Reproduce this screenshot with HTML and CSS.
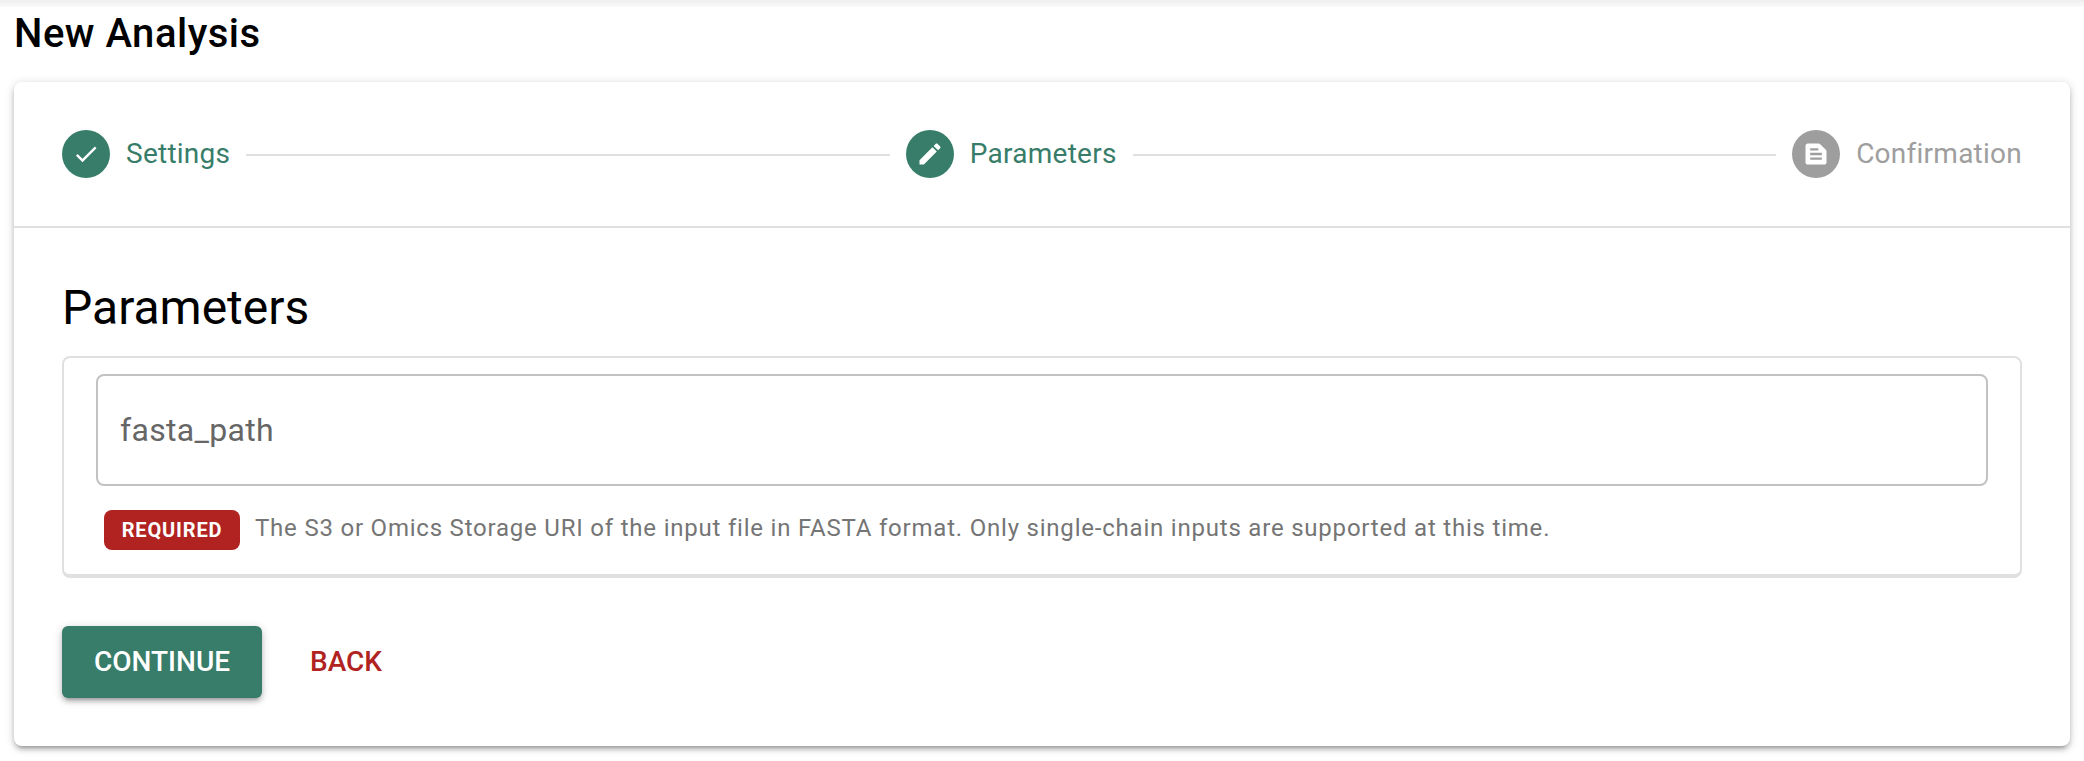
FILE: index.html
```html
<!DOCTYPE html>
<html lang="en">
<head>
<meta charset="utf-8">
<title>New Analysis</title>
<link rel="stylesheet" href="styles.css">
</head>
<body>
<div class="topbar-shadow"></div>
<main class="page">
  <h1 class="page-title">New Analysis</h1>
  <section class="card">
    <nav class="stepper">
      <div class="step">
        <span class="dot"><svg class="icon" viewBox="0 0 24 24"><path d="M9 16.17L4.83 12l-1.42 1.41L9 19 21 7l-1.41-1.41z"/></svg></span>
        <span>Settings</span>
      </div>
      <span class="line"></span>
      <div class="step">
        <span class="dot"><svg class="icon" viewBox="0 0 24 24"><path d="M3 17.25V21h3.75L17.81 9.94l-3.75-3.75L3 17.25zM20.71 7.04c.39-.39.39-1.02 0-1.41l-2.34-2.34c-.39-.39-1.02-.39-1.41 0l-1.83 1.83 3.75 3.75 1.83-1.83z"/></svg></span>
        <span>Parameters</span>
      </div>
      <span class="line"></span>
      <div class="step step-pending">
        <span class="dot"><svg class="icon" viewBox="0 0 24 24"><path fill-rule="evenodd" d="M20.41 8.41l-4.83-4.83c-.37-.37-.88-.58-1.41-.58H5c-1.1 0-2 .9-2 2v14c0 1.1.9 2 2 2h14c1.1 0 2-.9 2-2V9.83c0-.53-.21-1.04-.59-1.42zM7 7h7v2H7V7zm10 10H7v-2h10v2zm0-4H7v-2h10v2z"/></svg></span>
        <span>Confirmation</span>
      </div>
    </nav>
    <div class="content">
      <h2 class="heading">Parameters</h2>
      <div class="params">
        <div class="field">fasta_path</div>
        <div class="hint">
          <span class="badge">REQUIRED</span>
          <span class="caption">The S3 or Omics Storage URI of the input file in FASTA format. Only single-chain inputs are supported at this time.</span>
        </div>
      </div>
      <div class="actions">
        <button class="btn btn-primary">CONTINUE</button>
        <button class="btn btn-flat">BACK</button>
      </div>
    </div>
  </section>
</main>
</body>
</html>
```
FILE: styles.css
```css
* { box-sizing: border-box; }
body {
  margin: 0;
  height: 761px;
  background: #fff;
  color: #000;
  font-family: Roboto, "Liberation Sans", sans-serif;
  font-size: 28px;
  overflow: hidden;
}
.topbar-shadow {
  height: 7px;
  background: linear-gradient(#efefef, #fafafa);
}
.page { padding: 0 14px; }
.page-title {
  margin: 0;
  height: 75px;
  padding-top: 7px;
  font-size: 40px;
  font-weight: 500;
  line-height: 40px;
  letter-spacing: 0.5px;
}
.card {
  height: 664px;
  border-radius: 8px;
  background: #fff;
  box-shadow: 0 2px 10px rgba(0,0,0,.2), 0 4px 4px rgba(0,0,0,.14), 0 6px 2px -4px rgba(0,0,0,.12);
}
.stepper {
  display: flex;
  align-items: center;
  gap: 16px;
  height: 146px;
  padding: 0 48px;
  border-bottom: 2px solid #e0e0e0;
}
.step {
  display: flex;
  align-items: center;
  gap: 16px;
  color: #387d69;
  line-height: 28px;
  letter-spacing: 0.25px;
}
.step-pending { color: #9e9e9e; }
.dot {
  display: flex;
  align-items: center;
  justify-content: center;
  width: 48px;
  height: 48px;
  border-radius: 50%;
  background: currentColor;
}
.icon { width: 28px; height: 28px; fill: #fff; }
.line { flex: 1; height: 2px; margin-top: 2px; background: #e0e0e0; }
.content { padding: 48px; }
.heading {
  margin: 0 0 16px;
  font-size: 48px;
  font-weight: 400;
  line-height: 64px;
}
.params {
  height: 222px;
  padding: 16px 32px 0;
  border: 2px solid #e0e0e0;
  border-bottom-width: 4px;
  border-radius: 8px;
}
.field {
  display: flex;
  align-items: center;
  height: 112px;
  padding: 0 22px;
  border: 2px solid #c2c2c2;
  border-radius: 8px;
  color: #666;
  font-size: 32px;
  letter-spacing: 0.3px;
}
.hint {
  display: flex;
  align-items: flex-start;
  gap: 15px;
  padding: 24px 8px 0;
}
.badge {
  width: 136px;
  height: 40px;
  border-radius: 8px;
  background: #b02321;
  color: #fff;
  font-size: 20px;
  font-weight: 700;
  line-height: 40px;
  letter-spacing: 0.85px;
  text-align: center;
}
.caption {
  color: #757575;
  font-size: 24px;
  line-height: 36px;
  letter-spacing: 0.79px;
}
.actions {
  display: flex;
  gap: 16px;
  padding-top: 48px;
}
.btn {
  height: 72px;
  padding: 0 32px;
  border: 0;
  border-radius: 6px;
  background: none;
  font: 500 28px/48px Roboto, "Liberation Sans", sans-serif;
}
.btn-primary {
  width: 200px;
  background: #387d69;
  color: #fff;
  box-shadow: 0 2px 10px rgba(0,0,0,.2), 0 4px 4px rgba(0,0,0,.14), 0 6px 2px -4px rgba(0,0,0,.12);
}
.btn-flat { color: #b02321; }
```
